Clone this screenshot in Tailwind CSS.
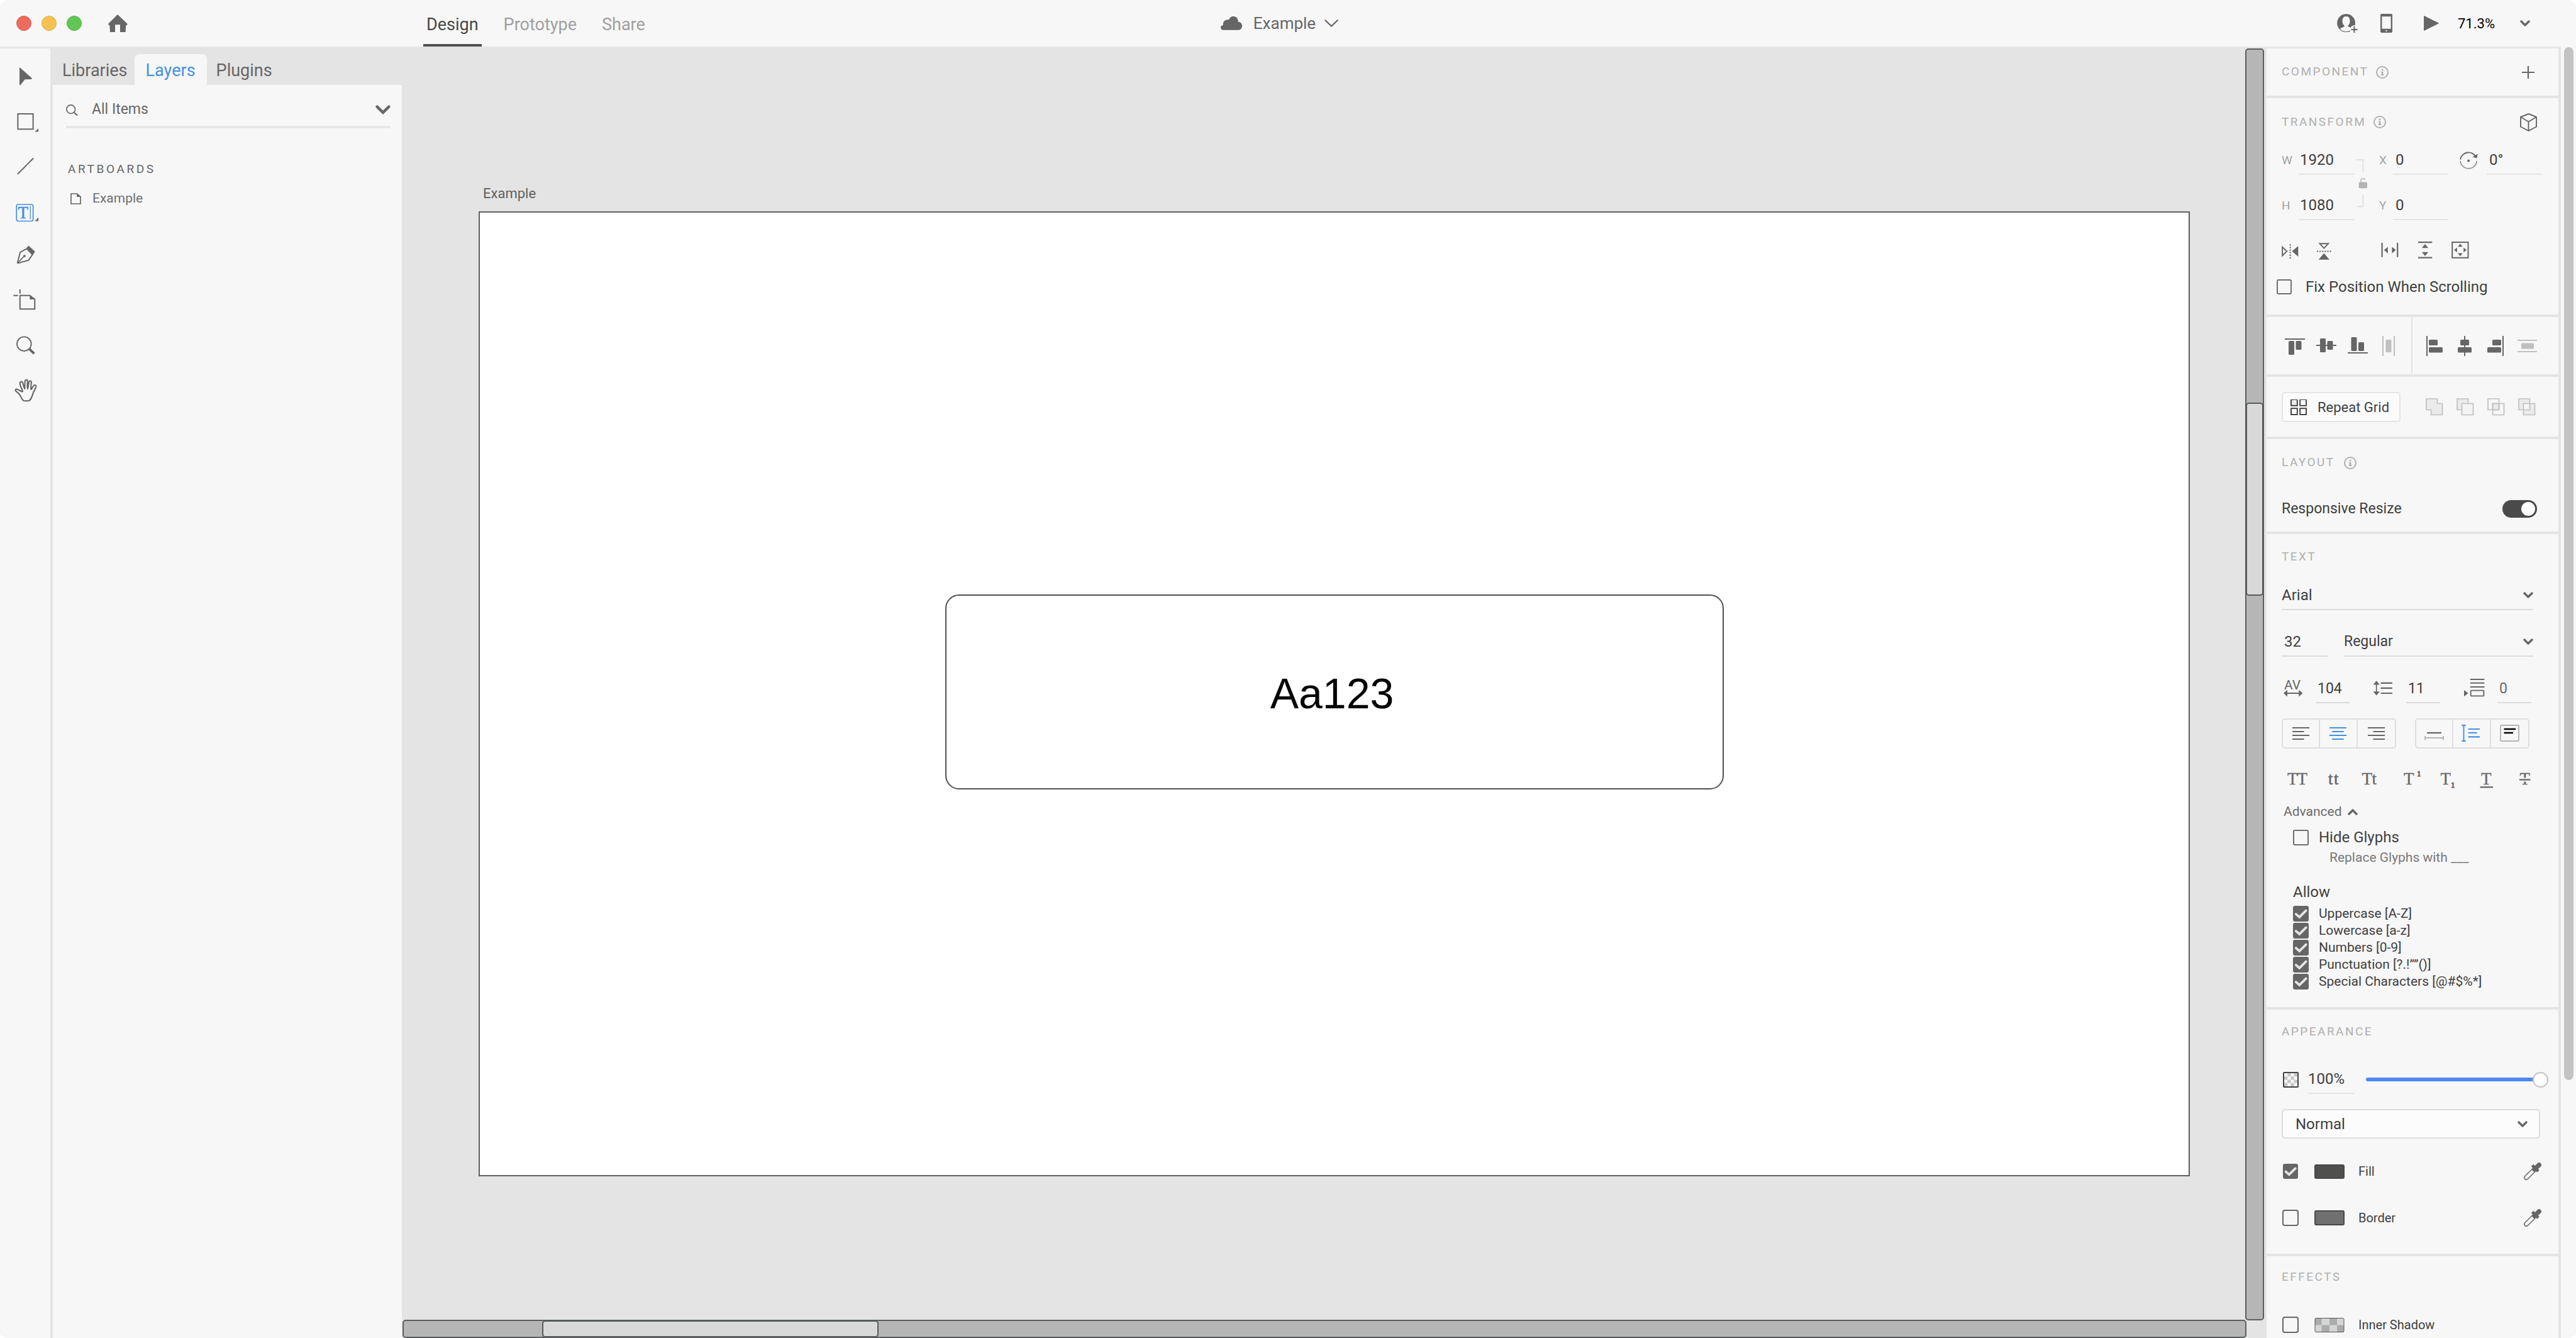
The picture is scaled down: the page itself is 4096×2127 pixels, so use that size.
<!DOCTYPE html>
<html lang="en">
<head>
<meta charset="utf-8">
<title>Example</title>
<script src="https://cdn.jsdelivr.net/npm/@tailwindcss/browser@4"></script>
</head>
<body class="bg-white font-['Roboto',sans-serif] text-[#404040]">
<!-- shared glyphs -->
<svg class="hidden" aria-hidden="true">
  <symbol id="chev" viewBox="0 0 16 10"><path d="M2 2L8 8L14 2" fill="none" stroke="#666" stroke-width="3.4" stroke-linecap="round" stroke-linejoin="round"/></symbol>
  <symbol id="info" viewBox="0 0 20 20"><circle cx="10" cy="10" r="9" fill="none" stroke="#b0b0b0" stroke-width="2"/><path d="M8.8 4.8h2.6v2.4H8.8zM8 8.8h3.4v4.4h1v1.8H7.8v-1.8h1v-2.6H8z" fill="#b0b0b0"/></symbol>
  <symbol id="tick" viewBox="0 0 24 24"><path d="M4.6 12.6L9.8 17.2L19.8 7.4" fill="none" stroke="#e4e4e4" stroke-width="3.8" stroke-linecap="round" stroke-linejoin="miter"/></symbol>
  <symbol id="dropper" viewBox="0 0 28 28"><path d="M17 6.8L1.8 21.8Q-.2 24.4 1.8 26.4Q4.2 28.4 6.6 26L21.2 11.2" fill="none" stroke="#666" stroke-width="1.5"/><path d="M13.5 4.5L23 14" stroke="#666" stroke-width="5"/><path d="M17 11L24.2 3.8" stroke="#666" stroke-width="7.4" stroke-linecap="round"/><path d="M15 9L19 13" stroke="#666" stroke-width="2"/></symbol>
</svg>

<div class="flex h-screen flex-col overflow-hidden rounded-[12px] bg-[#f7f7f7]">
  <header class="grid h-[74px] shrink-0 grid-cols-[1fr_auto_1fr] items-center pr-[27px]">
    <div class="flex h-full items-center">
      <div class="flex gap-4 pl-[26px]">
        <button aria-label="Close" class="size-6 rounded-full border border-[#d9604f] bg-[#ed6b5f]"></button>
        <button aria-label="Minimize" class="size-6 rounded-full border border-[#dfae45] bg-[#f5c251]"></button>
        <button aria-label="Zoom" class="size-6 rounded-full border border-[#54b046] bg-[#62c655]"></button>
      </div>
      <button aria-label="Home" class="ml-[42px]"><svg class="h-7 w-[31px]" viewBox="0 0 31 28"><path d="M15 0L30.5 14.8Q31 17 28.3 17.4L27.6 28H19V16.2H11V28H3L2.4 17.4Q-.2 17 .2 14.8Z" fill="#666"/></svg></button>
      <nav class="ml-[470px] flex h-full gap-[30px] text-[27px] text-[#a0a0a0]">
        <a href="#" class="flex items-center border-b-4 border-[#505050] px-[5px] pt-2 text-[#484848]">Design</a>
        <a href="#" class="flex items-center border-b-4 border-transparent px-[5px] pt-2">Prototype</a>
        <a href="#" class="flex items-center border-b-4 border-transparent px-[5px] pt-2">Share</a>
      </nav>
    </div>
    <button class="flex items-center text-[26px] text-[#666]">
      <svg class="h-[22px] w-[34px]" viewBox="0 0 34 22"><path d="M4 21.7C1.5 21.7 0 20 0 18C0 15.5 1.8 14 4 13.8C3 9 6.5 5.3 11 5.3C12 5.3 12.6 5.4 13 5.6C14 2 17 0 20.5 0C25 0 28 4 27.7 8.8C31.5 8.8 34 11.5 34 15.2C34 19 31.5 21.7 28 21.7Z" fill="#666"/></svg>
      <span class="mr-[14px] ml-[18px]">Example</span>
      <svg class="h-[12px] w-[22px]" viewBox="0 0 22 12"><path d="M1.3 1.3L11 10.6L20.7 1.3" fill="none" stroke="#666" stroke-width="2.2" stroke-linecap="round"/></svg>
    </button>
    <div class="flex items-center justify-end pr-[46px]">
      <button aria-label="Invite"><svg class="h-[30px] w-[33px]" viewBox="0 0 33 30"><circle cx="14.6" cy="14.7" r="14.4" fill="#666"/><path d="M14.5 4C10 4 8.5 7.5 8.5 12C8.5 15 10 17.5 11.6 18.7V20.2C9 21.5 6.5 22.5 4.6 23.6A13 13 0 0 0 24.5 23.4C22 22 19.5 21 17.5 20V18.6C19.5 17 20.6 15 20.6 12C20.6 7 19 4 14.5 4Z" fill="#f7f7f7"/><circle cx="27.4" cy="25" r="6.8" fill="#f7f7f7"/><path d="M27.4 20V30M22.4 24.9H32.6" stroke="#666" stroke-width="2"/></svg></button>
      <button aria-label="Preview on device" class="ml-9"><svg class="h-[30px] w-[19px]" viewBox="0 0 19 30"><rect width="19" height="30" rx="2" fill="#666"/><path d="M2.4 4.2H16.6V23.8H2.4zM8.5 26h2v2h-2z" fill="#f7f7f7"/></svg></button>
      <button aria-label="Play" class="ml-[50px]"><svg class="size-6" viewBox="0 0 24 24"><path d="M0 .5Q.3-.2 1 .2L23.4 11.5Q24 12 23.4 12.5L1 23.8Q.2 24.2 0 23.5Z" fill="#666"/></svg></button>
      <button class="ml-[30px] flex items-center gap-[40px] text-[22px] text-black">71.3%<svg class="h-[10px] w-[16px]"><use href="#chev"/></svg></button>
    </div>
  </header>

  <div class="flex min-h-0 flex-1 bg-[#e4e4e4]">
    <!-- tools -->
    <div class="mt-[3px] mr-1 w-20 bg-[#f7f7f7] pt-2">
      <div class="grid h-[572px] grid-rows-8 place-items-center">
        <button aria-label="Select"><svg class="size-10 overflow-visible" viewBox="0 0 40 40"><path d="M11 6.6Q11.3 6 11.9 6.6L30.4 23Q31 25 29.8 25.1L19.6 25.2L12.4 34.2Q11.2 35 11 34Z" fill="#666"/></svg></button>
        <button aria-label="Rectangle"><svg class="size-10 overflow-visible" viewBox="0 0 40 40"><rect x="8.4" y="9" width="24.2" height="24.3" fill="none" stroke="#666" stroke-width="2"/><path d="M41 32V37.4H35.6Z" fill="#666"/></svg></button>
        <button aria-label="Line"><svg class="size-10 overflow-visible" viewBox="0 0 40 40"><path d="M8.5 32.3L32.6 8" stroke="#666" stroke-width="2" stroke-linecap="round"/></svg></button>
        <button aria-label="Text"><svg class="size-10 overflow-visible" viewBox="0 0 40 40"><rect x="6.2" y="10" width="26.4" height="26.5" rx="3" fill="none" stroke="#4490e2" stroke-width="1.7"/><text x="8.6" y="31.8" font-family="Liberation Serif, serif" font-size="27" fill="#4490e2" stroke="#4490e2" stroke-width=".6">T</text><path d="M28.2 12.4V33.5" stroke="#4490e2" stroke-width="1.3"/><path d="M41 30.5V36.4H35.6Z" fill="#666"/></svg></button>
        <button aria-label="Pen"><svg class="size-10 overflow-visible" viewBox="0 0 40 40"><path d="M7.8 30.6L12.2 14L22.6 8.4L31.6 17.8L25.4 26.6L9.2 31.2Z" fill="none" stroke="#666" stroke-width="1.9"/><path d="M21.8 7.8L25.4 3.6L35.8 13.1L31.9 18.5Z" fill="#666"/><path d="M8.3 30.6L18.8 19.9" stroke="#666" stroke-width="1.5"/><circle cx="18.9" cy="19.9" r="1.9" fill="#666"/></svg></button>
        <button aria-label="Artboard"><svg class="size-10 overflow-visible" viewBox="0 0 40 40"><path d="M11.8 11.8H27.5L35.3 18V33.3H11.8ZM11.8 1.9V8.7M1.4 11.8H8.6" fill="none" stroke="#666" stroke-width="2"/><path d="M27.3 11.2L36 18H27.3Z" fill="#666"/></svg></button>
        <button aria-label="Zoom tool"><svg class="size-10 overflow-visible" viewBox="0 0 40 40"><circle cx="18.3" cy="16.7" r="11.3" fill="none" stroke="#666" stroke-width="1.9"/><path d="M26.2 24.4L34.3 32" stroke="#666" stroke-width="3.8"/></svg></button>
        <button aria-label="Hand"><svg class="size-10 overflow-visible" viewBox="0 0 40 40"><path d="M18 36C16.400 35.600 15 33.500 14.200 32C13 29.500 12 26.500 10 24.700C8.500 23.200 6 21.600 4.800 20.200C4 18.500 5.200 17.500 6.800 17.700C9.500 18.300 12.500 20.800 15 21.500C16 21.700 16.300 21 15.800 20C15.200 17.800 14.200 16.500 13.300 14.500C12.600 12.500 11.600 10 11.700 8C12 5.500 14.800 5 15.900 6.700C17 9.500 17.200 13.500 19.200 17C20 12 18.800 7.500 20 3.900C20.500 2.500 23.300 2.500 23.700 4.100C24 8 22.800 13 23.900 17.100C25.500 13 24.800 9 26.300 5.500C27.200 3.900 29.600 4.200 29.800 6C30 10 28.500 14 29.400 18C31 16.500 32 13 34 11.500C35.500 10.500 37.600 11 37.400 13.200C36.500 16.500 34.500 20 33 23C31.800 26 31.400 28.500 30 31C29 33.500 28 35.300 26.200 36C23.500 36.500 20.500 36.500 18 36Z" fill="none" stroke="#666" stroke-width="2.1" stroke-linejoin="round"/></svg></button>
      </div>
    </div>

    <!-- layers panel -->
    <div class="mt-[3px] flex w-[555px] shrink-0 flex-col">
      <div class="flex h-[58px] items-stretch pt-[9px] text-[27px] text-[#666]">
        <a href="#" class="flex items-center pt-1 pr-[11px] pl-[15px]">Libraries</a>
        <a href="#" class="flex items-center rounded-t-[8px] bg-[#f7f7f7] px-[18px] pt-1 text-[#4490e2]">Layers</a>
        <a href="#" class="flex items-center pt-1 pl-[15px]">Plugins</a>
      </div>
      <div class="flex-1 bg-[#f7f7f7] pt-[14px]">
        <label class="mr-[18px] ml-[21px] flex h-[55px] items-center border-b-4 border-[#e6e6e6] text-[23px] text-[#666]">
          <svg class="h-[18px] w-[19px]" viewBox="0 0 19 18"><circle cx="7.700" cy="7.700" r="6.800" fill="none" stroke="#666" stroke-width="1.600"/><path d="M12.600 12.600L17.600 17.200" stroke="#666" stroke-width="2" stroke-linecap="round"/></svg>
          <select aria-label="Filter layers" class="ml-[22px] flex-1 appearance-none outline-none"><option>All Items</option></select>
          <svg class="h-[15px] w-[24px]" viewBox="0 0 24 15"><path d="M2.600 2.600L12 11.800L21.400 2.600" fill="none" stroke="#666" stroke-width="4.400" stroke-linecap="round"/></svg>
        </label>
        <h2 class="mt-[49px] pl-6 text-[19px] leading-8 tracking-[0.19em] text-[#666]">ARTBOARDS</h2>
        <button class="mt-[15px] ml-7 flex h-8 items-center gap-[18px] text-[21px] text-[#6f6f6f]">
          <svg class="h-[18px] w-[17px]" viewBox="0 0 17 18"><path d="M1 1H10.500L16 6V17H1Z" fill="none" stroke="#666" stroke-width="1.700"/><path d="M10.200.5L16.800 6H10.200Z" fill="#666"/></svg>Example
        </button>
      </div>
    </div>

    <!-- canvas -->
    <main class="mt-[3px] flex min-w-0 flex-1 flex-col">
      <div class="min-h-0 flex-1 pt-[214px] pr-[88px] pl-[122px]">
        <div class="h-[45px] pl-[7px] text-[22px] leading-[34px] text-[#606060]">Example</div>
        <div class="flex aspect-[2720/1533] w-full items-center justify-center border-2 border-[#606060] bg-white pb-[5px]">
          <div class="flex h-[310px] w-[1238px] items-center justify-center rounded-[22px] border-2 border-[#505050] pt-1 pr-[7px] font-['Liberation_Sans',sans-serif] text-[68px] text-black">Aa123</div>
        </div>
      </div>
      <div class="relative -mr-[2px] ml-px h-[29px] shrink-0 rounded-[5px] border-2 border-[#5a5d5e] bg-[#b6b6b6]">
        <div class="absolute -inset-y-[1px] left-[7.5%] w-[18.3%] rounded-[5px] border-2 border-[#555a5a] bg-[#d9d9d9]"></div>
      </div>
    </main>
    <div class="relative mt-[3px] mb-7 w-[30px] shrink-0 rounded-[5px] border-2 border-[#5a5d5e] bg-[#b6b6b6]">
      <div class="absolute -inset-x-[1px] top-[27.8%] h-[15.2%] rounded-[5px] border-2 border-[#555a5a] bg-[#d9d9d9]"></div>
    </div>

    <!-- properties -->
    <aside class="mx-1 mt-[3px] w-[464px] shrink-0 overflow-hidden bg-[#f7f7f7] text-[24px]">
      <section class="flex h-[79px] items-center border-b-4 border-[#e4e4e4] pr-[38px] pl-6">
        <h2 class="text-[19px] tracking-[0.13em] text-[#b0b0b0]">COMPONENT</h2>
        <svg class="ml-3 size-5"><use href="#info"/></svg>
        <button aria-label="Add component" class="ml-auto"><svg class="size-5" viewBox="0 0 20 20"><path d="M10 0V20M0 10H20" stroke="#666" stroke-width="2.200"/></svg></button>
      </section>

      <section class="h-[348px] border-b-4 border-[#e4e4e4] pl-6">
        <div class="flex h-[76px] items-center pr-[34px]">
          <h2 class="text-[19px] tracking-[0.13em] text-[#b0b0b0]">TRANSFORM</h2>
          <svg class="ml-3 size-5"><use href="#info"/></svg>
          <button aria-label="3D transform" class="ml-auto"><svg class="h-[29px] w-[27px]" viewBox="0 0 27 29"><path d="M13.500 1L26 6V21.500L13.500 28L1 21.500V6ZM1 6L13.500 13.500L26 6M13.500 13.500V28" fill="none" stroke="#666" stroke-width="1.900" stroke-linejoin="round"/></svg></button>
        </div>
        <div class="grid grid-cols-[27px_88px_40px_22px_88px_61px_88px] grid-rows-[46px_46px] items-center gap-y-[26px]">
          <label for="w" class="text-[19px] text-[#a3a3a3]">W</label>
          <input id="w" value="1920" class="h-[46px] w-full border-b-2 border-[#e4e4e4] pl-[2px] outline-none">
          <button aria-label="Lock aspect ratio" class="row-span-2 pl-1"><svg class="h-[77px] w-[17px]" viewBox="0 0 17 77"><path d="M0 1H10.300V20.500M10.300 56.500V75.500H0" fill="none" stroke="#e2e2e2" stroke-width="2"/><rect x="3.700" y="36.500" width="13.300" height="9.800" rx="1.500" fill="#b3b3b3"/><path d="M7 37V34A3.500 3.500 0 0 1 13.800 33" fill="none" stroke="#b3b3b3" stroke-width="1.500"/></svg></button>
          <label for="x" class="text-[19px] text-[#a3a3a3]">X</label>
          <input id="x" value="0" class="h-[46px] w-full border-b-2 border-[#e4e4e4] pl-1 outline-none">
          <label for="r" class="pl-[18px]"><svg class="size-[29px]" viewBox="0 0 29 29" aria-label="Rotation"><path d="M1.100 12.500A13.200 13.200 0 0 1 26 8.800" fill="none" stroke="#666" stroke-width="1.900"/><path d="M1 14.800A13.200 13.200 0 0 0 27.300 14.800" fill="none" stroke="#999" stroke-width="1.900"/><path d="M28.800 3.500L27.400 10.600L20.400 8.600Z" fill="#666"/><circle cx="14.100" cy="14.500" r="2" fill="#666"/></svg></label>
          <input id="r" value="0°" class="h-[46px] w-full border-b-2 border-[#e4e4e4] pl-1 outline-none">
          <label for="h" class="text-[19px] text-[#a3a3a3]">H</label>
          <input id="h" value="1080" class="h-[46px] w-full border-b-2 border-[#e4e4e4] pl-[2px] outline-none">
          <label for="y" class="text-[19px] text-[#a3a3a3]">Y</label>
          <input id="y" value="0" class="h-[46px] w-full border-b-2 border-[#e4e4e4] pl-1 outline-none">
        </div>
        <div class="mt-[33px] flex">
          <div class="flex gap-[26px]">
            <button aria-label="Flip horizontal"><svg class="h-[30px] w-7" viewBox="0 0 28 30"><path d="M1.100 9.800L8.200 16.500L1.100 23.500Z" fill="none" stroke="#666" stroke-width="1.900"/><path d="M26.300 7.900L16.400 16.400L26.300 25Z" fill="#666"/><path d="M13.600 5.300V28.500" stroke="#666" stroke-width="2" stroke-dasharray="2.200 1.900"/></svg></button>
            <button aria-label="Flip vertical"><svg class="h-[30px] w-7" viewBox="0 0 28 30"><path d="M6.500 4.300H20.100L13.300 11.600Z" fill="none" stroke="#666" stroke-width="1.900"/><path d="M13.300 19.400L21.800 29.800H4.700Z" fill="#666"/><path d="M2 16.500H24.600" stroke="#666" stroke-width="2" stroke-dasharray="2.200 1.900"/></svg></button>
          </div>
          <div class="ml-[76px] flex gap-7">
            <button aria-label="Fit width"><svg class="h-[30px] w-7" viewBox="0 0 28 30"><path d="M1.600 3.100V25.800M26.200 3.100V25.800" stroke="#666" stroke-width="2.200"/><path d="M4.700 14.500L10.800 9.500V19.700ZM23.500 14.500L17.300 9.500V19.700Z" fill="#666"/></svg></button>
            <button aria-label="Fit height"><svg class="h-[30px] w-7" viewBox="0 0 28 30"><path d="M3 2.200H25.300M3 26.700H25.300" stroke="#666" stroke-width="2.200"/><path d="M14 5L8.900 11.200H19.100ZM14 23.900L8.900 17.700H19.100Z" fill="#666"/></svg></button>
            <button aria-label="Fit content"><svg class="h-[30px] w-7" viewBox="0 0 28 30"><rect x="1.200" y="2.100" width="25.300" height="24.700" fill="none" stroke="#666" stroke-width="2"/><path d="M13.900 4.600L10 9.300H17.800ZM13.900 24.300L10 19.500H17.800ZM4.200 14.500L8.900 10.600V18.300ZM24 14.500L19.200 10.600V18.300Z" fill="#666"/></svg></button>
          </div>
        </div>
        <label class="mt-[30px] -ml-2 flex h-[26px] items-center gap-[22px]"><input type="checkbox" class="size-6 appearance-none rounded-[3px] border-2 border-[#6f6f6f]">Fix Position When Scrolling</label>
      </section>

      <section class="flex h-[95px] border-b-4 border-[#e4e4e4]">
        <div class="flex w-[232px] items-center gap-[18px] border-r-2 border-[#e4e4e4] pl-[29px]">
          <button aria-label="Align top"><svg class="h-[34px] w-8" viewBox="0 0 32 34" fill="#666"><path d="M0 5H32V7H0z"/><rect x="6" y="9" width="9" height="22" rx="1.500"/><rect x="17.500" y="9" width="9" height="14" rx="1.500"/></svg></button>
          <button aria-label="Align middle"><svg class="h-[34px] w-8" viewBox="0 0 32 34" fill="#666"><path d="M0 15H32V17H0z"/><rect x="6" y="5" width="9" height="22" rx="1.500"/><rect x="17.500" y="9" width="9" height="14" rx="1.500"/></svg></button>
          <button aria-label="Align bottom"><svg class="h-[34px] w-8" viewBox="0 0 32 34" fill="#666"><path d="M0 27H32V29H0z"/><rect x="5.500" y="3" width="9" height="22" rx="1.500"/><rect x="17" y="11" width="9" height="14" rx="1.500"/></svg></button>
          <button aria-label="Distribute horizontally"><svg class="h-[34px] w-8" viewBox="0 0 32 34" fill="#c0c0c0"><path d="M5 1H7V33H5zM23 1H25V33H23z"/><rect x="10.500" y="7" width="9" height="20" rx="1.500"/></svg></button>
        </div>
        <div class="flex items-center gap-[17px] pl-[19px]">
          <button aria-label="Align left"><svg class="h-[34px] w-8" viewBox="0 0 32 34" fill="#666"><path d="M3 1H5V33H3z"/><rect x="7" y="7" width="14" height="9" rx="1.500"/><rect x="7" y="19" width="22" height="8.500" rx="1.500"/></svg></button>
          <button aria-label="Align center"><svg class="h-[34px] w-8" viewBox="0 0 32 34" fill="#666"><path d="M14 1H16V33H14z"/><rect x="8" y="7" width="14" height="9" rx="1.500"/><rect x="4" y="19" width="22" height="8.500" rx="1.500"/></svg></button>
          <button aria-label="Align right"><svg class="h-[34px] w-8" viewBox="0 0 32 34" fill="#666"><path d="M26 1H28V33H26z"/><rect x="10" y="7" width="14" height="9" rx="1.500"/><rect x="2" y="19" width="22" height="8.500" rx="1.500"/></svg></button>
          <button aria-label="Distribute vertically"><svg class="h-[34px] w-8" viewBox="0 0 32 34" fill="#c0c0c0"><path d="M1 7H32V9H1zM1 25H32V27H1z"/><rect x="7" y="12.500" width="20" height="9" rx="1.500"/></svg></button>
        </div>
      </section>

      <section class="flex h-[99px] items-center border-b-4 border-[#e4e4e4] pl-6">
        <button class="flex h-12 w-[189px] items-center gap-[17px] rounded-[5px] border-2 border-[#e4e4e4] bg-[#fbfbfb] pt-[2px] pl-3 text-[22px]">
          <svg class="size-[26px]" viewBox="0 0 26 26" fill="#fff" stroke="#404040" stroke-width="1.900"><rect x="1" y="0" width="9.800" height="9.800" fill="#ebebeb"/><rect x="15.200" y="0" width="9.800" height="9.800"/><rect x="1" y="14.200" width="9.800" height="9.800"/><rect x="15.200" y="14.200" width="9.800" height="9.800"/></svg>Repeat Grid
        </button>
        <div class="ml-10 flex gap-[21px]">
          <button aria-label="Add"><svg class="size-7" viewBox="0 0 28 28"><path d="M1 1H18.500V8.500H26.500V26.500H8.500V18.500H1Z" fill="#ebebeb" stroke="#c0c0c0" stroke-width="1.700"/></svg></button>
          <button aria-label="Subtract"><svg class="size-7" viewBox="0 0 28 28" stroke="#c0c0c0" stroke-width="1.700"><path d="M1 1H18.500V18.500H1Z" fill="#ebebeb"/><path d="M8.500 8.500H26.500V26.500H8.500Z" fill="#f3f3f3"/></svg></button>
          <button aria-label="Intersect"><svg class="size-7" viewBox="0 0 28 28" stroke="#c0c0c0" stroke-width="1.700" fill="none"><path d="M8.500 8.500H18.500V18.500H8.500Z" fill="#ebebeb"/><path d="M1 1H18.500V18.500H1ZM8.500 8.500H26.500V26.500H8.500Z"/></svg></button>
          <button aria-label="Exclude overlap"><svg class="size-7" viewBox="0 0 28 28" stroke="#c0c0c0" stroke-width="1.700"><path d="M1 1H18.500V18.500H1ZM8.500 8.500H26.500V26.500H8.500Z" fill="#ebebee" fill-rule="evenodd"/></svg></button>
        </div>
      </section>

      <section class="h-[151px] border-b-4 border-[#e4e4e4] pr-[34px] pl-6">
        <div class="flex h-[75px] items-center">
          <h2 class="text-[19px] tracking-[0.13em] text-[#b0b0b0]">LAYOUT</h2>
          <svg class="ml-[14px] size-5"><use href="#info"/></svg>
        </div>
        <div class="flex h-[72px] items-center justify-between text-[23px]">
          <span id="rr">Responsive Resize</span>
          <button role="switch" aria-checked="true" aria-labelledby="rr" class="flex h-7 w-[55px] items-center justify-end rounded-full bg-[#4a4a4a] pr-[3px]"><span class="size-[22px] rounded-full bg-white"></span></button>
        </div>
      </section>

      <section class="h-[756px] border-b-4 border-[#e4e4e4] pl-6">
        <h2 class="mb-[3px] text-[19px] leading-[72px] tracking-[0.13em] text-[#b0b0b0]">TEXT</h2>
        <div class="mr-10 flex items-center border-b-2 border-[#dcdcdc]">
          <select aria-label="Font" class="h-11 flex-1 appearance-none outline-none"><option>Arial</option></select>
          <svg class="h-[10px] w-[16px]"><use href="#chev"/></svg>
        </div>
        <div class="mt-7 mr-10 flex gap-[25px]">
          <input aria-label="Font size" value="32" class="h-[46px] w-[74px] border-b-2 border-[#dcdcdc] pl-1 outline-none">
          <div class="flex flex-1 items-center border-b-2 border-[#dcdcdc]">
            <select aria-label="Font weight" class="h-11 flex-1 appearance-none text-[23px] outline-none"><option>Regular</option></select>
            <svg class="h-[10px] w-[16px]"><use href="#chev"/></svg>
          </div>
        </div>
        <div class="mt-7 grid grid-cols-[54px_54px_90px_54px_91px_54px] items-center">
          <label for="cs" class="flex justify-end pr-[21px]"><svg class="h-[30px] w-8 overflow-visible" viewBox="0 0 32 30"><text x="3" y="15.500" font-family="Roboto, sans-serif" font-size="21" fill="#666">AV</text><path d="M6 22H28" stroke="#666" stroke-width="2"/><path d="M2 22L8 16.700V27.400ZM32.300 22L26.300 16.700V27.400Z" fill="#666"/></svg></label>
          <input id="cs" aria-label="Character spacing" value="104" class="h-[46px] w-full border-b-2 border-[#dcdcdc] pl-[3px] text-[23px] outline-none">
          <label for="ls" class="flex justify-end pr-[21px]"><svg class="h-[30px] w-8 overflow-visible" viewBox="0 0 32 30"><path d="M5.700 6V22" stroke="#666" stroke-width="1.700"/><path d="M5.700 2.300L10.900 8.600H.5ZM5.700 25.400L10.900 19.200H.5Z" fill="#666"/><path d="M12.600 5.800H31M12.600 13.900H31M12.600 22H31" stroke="#666" stroke-width="2.200"/></svg></label>
          <input id="ls" aria-label="Line spacing" value="11" class="h-[46px] w-full border-b-2 border-[#dcdcdc] pl-[3px] text-[23px] outline-none">
          <label for="ps" class="flex justify-end pr-[21px]"><svg class="h-[30px] w-8 overflow-visible" viewBox="0 0 32 30"><path d="M9.800 0H32.400M9.800 5.800H32.400M9.800 12H32.400" stroke="#666" stroke-width="2.100"/><rect x="10.700" y="17.600" width="20.700" height="8.800" rx="1" fill="none" stroke="#666" stroke-width="1.900"/><path d="M0 17L6.500 22L0 27.200Z" fill="#666"/></svg></label>
          <input id="ps" aria-label="Paragraph spacing" value="0" class="h-[46px] w-full border-b-2 border-[#dcdcdc] pl-[3px] text-[23px] text-[#6a6a6a] outline-none">
        </div>
        <div class="mt-6 flex gap-[30px]">
          <div class="grid h-12 w-[182px] grid-cols-3 divide-x-2 divide-[#dedede] rounded-[5px] border-2 border-[#dedede]">
            <button aria-label="Left" class="grid place-items-center"><svg class="h-[22px] w-[27px]" viewBox="0 0 27 22"><path d="M0 2H27M0 8H18.500M0 14H27M0 20H18.500" stroke="#666" stroke-width="2.200"/></svg></button>
            <button aria-label="Center" class="grid place-items-center"><svg class="h-[22px] w-[27px]" viewBox="0 0 27 22"><path d="M0 2H27M4.200 8H22.700M0 14H27M4.200 20H22.700" stroke="#4490e2" stroke-width="2.200"/></svg></button>
            <button aria-label="Right" class="grid place-items-center"><svg class="h-[22px] w-[27px]" viewBox="0 0 27 22"><path d="M0 2H27M8.500 8H27M0 14H27M8.500 20H27" stroke="#666" stroke-width="2.200"/></svg></button>
          </div>
          <div class="grid h-12 w-[182px] grid-cols-3 divide-x-2 divide-[#dedede] rounded-[5px] border-2 border-[#dedede]">
            <button aria-label="Auto width" class="grid place-items-center"><svg class="h-7 w-[31px]" viewBox="0 0 31 28"><path d="M4 13H27" stroke="#666" stroke-width="2.200"/><path d="M1 21H30M1 18V24.400M30 18V24.400" stroke="#b5b5b5" stroke-width="1.900"/></svg></button>
            <button aria-label="Auto height" class="grid place-items-center"><svg class="h-7 w-[31px]" viewBox="0 0 31 28"><path d="M3.500 1V26" stroke="#4490e2" stroke-width="1.900"/><path d="M.4 0H6.600V2.300H.4zM.4 24.700H6.600V27H.4z" fill="#4490e2"/><path d="M10.600 7H29M10.600 13H24.600M10.600 19.300H29" stroke="#4490e2" stroke-width="2.200"/></svg></button>
            <button aria-label="Fixed size" class="grid place-items-center"><svg class="h-7 w-[31px]" viewBox="0 0 31 28"><rect x="1" y="1" width="29" height="25" rx="1.500" fill="none" stroke="#b3b3b3" stroke-width="1.900"/><path d="M6.500 7H25M6.500 13H21" stroke="#000" stroke-width="2.300"/></svg></button>
          </div>
        </div>
        <div class="mt-[33px] flex gap-[26px] pl-[9px]">
          <button aria-label="Uppercase"><svg class="h-[30px] w-[34px] overflow-visible" font-family="Liberation Serif, serif" font-size="27" fill="#666" stroke="#666" stroke-width=".3"><text x="0" y="24">T</text><text x="15.500" y="24">T</text></svg></button>
          <button aria-label="Lowercase"><svg class="h-[30px] w-[34px] overflow-visible" font-family="Liberation Serif, serif" font-size="27" fill="#666" stroke="#666" stroke-width=".5"><text x="5" y="24">t</text><text x="14" y="24">t</text></svg></button>
          <button aria-label="Title case"><svg class="h-[30px] w-[34px] overflow-visible" font-family="Liberation Serif, serif" font-size="27" fill="#666" stroke="#666" stroke-width=".3"><text x="-1.500" y="24">T</text><text x="14.500" y="24">t</text></svg></button>
          <button aria-label="Superscript"><svg class="h-[30px] w-[34px] overflow-visible" font-family="Liberation Serif, serif" font-size="27" fill="#666" stroke="#666" stroke-width=".3"><text x="5" y="24">T</text><text x="26" y="11" font-size="13" stroke-width="1">1</text></svg></button>
          <button aria-label="Subscript"><svg class="h-[30px] w-[34px] overflow-visible" font-family="Liberation Serif, serif" font-size="27" fill="#666" stroke="#666" stroke-width=".3"><text x="3.500" y="24">T</text><text x="20" y="29" font-size="13" stroke-width="1">1</text></svg></button>
          <button aria-label="Underline"><svg class="h-[30px] w-[34px] overflow-visible" font-family="Liberation Serif, serif" font-size="27" fill="#666" stroke="#666" stroke-width=".3"><text x="8" y="24">T</text><path d="M6.500 28.300H27" stroke-width="2.300"/></svg></button>
          <button aria-label="Strikethrough"><svg class="h-[30px] w-[34px] overflow-visible" font-family="Liberation Serif, serif" font-size="27" fill="#666" stroke="#666" stroke-width=".3"><text x="9.500" y="24">T</text><path d="M9 16.500H26.500" stroke="#f7f7f7" stroke-width="6"/><path d="M9 16.500H26.500" stroke-width="2.300"/></svg></button>
        </div>
        <button class="mt-[23px] flex h-[30px] items-center gap-[9px] pl-[3px] text-[21px] text-[#6a6a6a]">Advanced<svg class="h-[10px] w-[16px]" viewBox="0 0 16 10"><path d="M2 8L8 2L14 8" fill="none" stroke="#666" stroke-width="3.400" stroke-linecap="round"/></svg></button>
        <div class="pl-[18px]">
          <label class="mt-[11px] flex h-7 items-center gap-4"><input type="checkbox" class="size-[25px] appearance-none rounded-[3px] border-2 border-[#6f6f6f]">Hide Glyphs</label>
          <p class="pl-[58px] text-[21px] leading-9 text-[#787878]">Replace Glyphs with ___</p>
          <h3 class="mt-5 leading-[34px]">Allow</h3>
          <div class="mt-1 text-[21px]">
            <label class="flex h-[27px] items-center gap-4"><span class="grid size-[25px]"><input type="checkbox" checked class="col-start-1 row-start-1 size-[25px] appearance-none rounded-[3px] bg-[#666]"><svg class="pointer-events-none col-start-1 row-start-1 size-[25px]"><use href="#tick"/></svg></span>Uppercase [A-Z]</label>
            <label class="flex h-[27px] items-center gap-4"><span class="grid size-[25px]"><input type="checkbox" checked class="col-start-1 row-start-1 size-[25px] appearance-none rounded-[3px] bg-[#666]"><svg class="pointer-events-none col-start-1 row-start-1 size-[25px]"><use href="#tick"/></svg></span>Lowercase [a-z]</label>
            <label class="flex h-[27px] items-center gap-4"><span class="grid size-[25px]"><input type="checkbox" checked class="col-start-1 row-start-1 size-[25px] appearance-none rounded-[3px] bg-[#666]"><svg class="pointer-events-none col-start-1 row-start-1 size-[25px]"><use href="#tick"/></svg></span>Numbers [0-9]</label>
            <label class="flex h-[27px] items-center gap-4"><span class="grid size-[25px]"><input type="checkbox" checked class="col-start-1 row-start-1 size-[25px] appearance-none rounded-[3px] bg-[#666]"><svg class="pointer-events-none col-start-1 row-start-1 size-[25px]"><use href="#tick"/></svg></span>Punctuation [?.!””()]</label>
            <label class="flex h-[27px] items-center gap-4"><span class="grid size-[25px]"><input type="checkbox" checked class="col-start-1 row-start-1 size-[25px] appearance-none rounded-[3px] bg-[#666]"><svg class="pointer-events-none col-start-1 row-start-1 size-[25px]"><use href="#tick"/></svg></span>Special Characters [@#$%*]</label>
          </div>
        </div>
      </section>

      <section class="h-[392px] border-b-4 border-[#e4e4e4] pl-6">
        <h2 class="text-[19px] leading-[70px] tracking-[0.13em] text-[#b0b0b0]">APPEARANCE</h2>
        <div class="mt-[18px] flex items-center pl-[2px]">
          <svg class="size-[25px]" viewBox="0 0 25 25"><path d="M7.200 2h5.200v5.200H7.200zM17.600 2H23v5.200h-5.400zM2 7.200h5.200v5.200H2zM12.400 7.200h5.200v5.200h-5.200zM7.200 12.400h5.200v5.200H7.200zM17.600 12.400H23v5.200h-5.400zM2 17.600h5.200V23H2zM12.400 17.600h5.200V23h-5.200z" fill="#c6c6c6"/><rect x="1" y="1" width="23" height="23" rx="1" fill="none" stroke="#444" stroke-width="2"/></svg>
          <input aria-label="Opacity" value="100%" class="ml-[15px] h-[46px] w-[74px] border-b-2 border-[#e4e4e4] outline-none">
          <input type="range" aria-label="Opacity slider" min="0" max="100" value="100" class="ml-[18px] h-[6px] w-[290px] appearance-none rounded-full bg-[#4f87f5] [&::-webkit-slider-thumb]:size-[25px] [&::-webkit-slider-thumb]:appearance-none [&::-webkit-slider-thumb]:rounded-full [&::-webkit-slider-thumb]:border-2 [&::-webkit-slider-thumb]:border-solid [&::-webkit-slider-thumb]:border-[#c4c4c4] [&::-webkit-slider-thumb]:bg-white">
        </div>
        <div class="mt-6 flex h-[47px] w-[411px] items-center rounded-[5px] border-2 border-[#dcdcdc] bg-[#fcfcfc] pr-[18px] pl-5">
          <select aria-label="Blend mode" class="flex-1 appearance-none outline-none"><option>Normal</option></select>
          <svg class="h-[10px] w-[16px]"><use href="#chev"/></svg>
        </div>
        <div class="mt-[15px] pr-[27px] text-[20px]">
          <div class="flex h-[74px] items-center">
            <label class="flex items-center"><span class="grid w-7 place-items-center"><input type="checkbox" checked class="col-start-1 row-start-1 size-6 appearance-none rounded-[3px] bg-[#666]"><svg class="pointer-events-none col-start-1 row-start-1 size-6"><use href="#tick"/></svg></span><span class="mr-[22px] ml-6 h-[23px] w-12 rounded-[3px] border-2 border-[#484848] bg-[#4f4f4d]"></span>Fill</label>
            <button aria-label="Pick fill" class="ml-auto"><svg class="size-7"><use href="#dropper"/></svg></button>
          </div>
          <div class="flex h-[74px] items-center">
            <label class="flex items-center"><span class="grid w-7 place-items-center"><input type="checkbox" class="size-[26px] appearance-none rounded-[4px] border-2 border-[#666]"></span><span class="mr-[22px] ml-6 h-6 w-12 rounded-[3px] border-2 border-[#484848] bg-[#707070]"></span>Border</label>
            <button aria-label="Pick border" class="ml-auto"><svg class="size-7"><use href="#dropper"/></svg></button>
          </div>
        </div>
      </section>

      <section class="pl-6">
        <h2 class="text-[19px] leading-[65px] tracking-[0.13em] text-[#b0b0b0]">EFFECTS</h2>
        <label class="mt-[7px] flex h-[74px] items-center text-[20px]"><span class="grid w-7 place-items-center"><input type="checkbox" class="size-[26px] appearance-none rounded-[4px] border-2 border-[#666]"></span>
          <svg class="mr-[22px] ml-6 h-[23px] w-12" viewBox="0 0 48 23"><rect x="1" y=".5" width="46" height="22" rx="2" fill="#d4d6d4"/><path d="M1 .5H11.500V11.500H1zM24 .5H36V11.500H24zM11.500 11.500H24V22.500H11.500zM36 11.500H47V22.500H36z" fill="#acabae"/><rect x="1" y=".5" width="46" height="22" rx="2" fill="none" stroke="#555" stroke-width="1"/></svg>Inner Shadow</label>
      </section>
    </aside>

    <!-- window scrollbar -->
    <div class="w-6 shrink-0 bg-[#f7f7f7] pt-px pl-[5px]">
      <div class="h-[80%] w-[15px] rounded-full bg-[#c3c3c3]"></div>
    </div>
  </div>
</div>
</body>
</html>
